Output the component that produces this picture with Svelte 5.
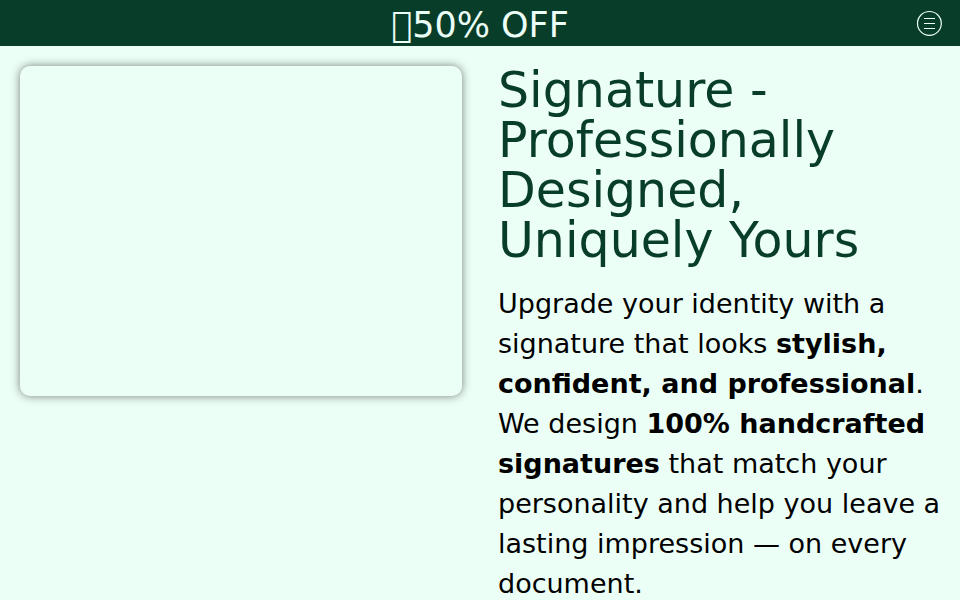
<script lang="ts">
  let menuOpen = $state(false);
</script>

<header class="topbar">
  <p class="offer">&#xF1234;50% OFF</p>
  <button
    class="menu-btn"
    aria-label="Menu"
    aria-expanded={menuOpen}
    onclick={() => (menuOpen = !menuOpen)}
  >
    <svg width="26" height="26" viewBox="0 0 26 26" fill="none" stroke="currentColor" stroke-width="1.2">
      <circle cx="13.4" cy="13.4" r="11.9" />
      <path d="M8 8.5h11M8 13.5h11M8 18.5h11" />
    </svg>
  </button>
</header>

<main class="hero">
  <div class="preview"></div>
  <section class="intro">
    <h1>Signature - Professionally Designed, Uniquely Yours</h1>
    <p>
      Upgrade your identity with a signature that looks
      <strong>stylish, confident, and professional</strong>. We design
      <strong>100% handcrafted signatures</strong> that match your personality and help you
      leave a lasting impression — on every document.
    </p>
  </section>
</main>

<style>
  :global(body) {
    margin: 0;
    background: #ecfff7;
    font-family: "DejaVu Sans", sans-serif;
  }

  .topbar {
    display: grid;
    grid-template-columns: 1fr auto 1fr;
    align-items: center;
    height: 46px;
    padding: 0 18px;
    background: #083d2a;
    color: #ecfff7;
  }

  .offer {
    grid-column: 2;
    margin: 0;
    padding-top: 4px;
    font-size: 35px;
    line-height: 42px;
    white-space: nowrap;
  }

  .menu-btn {
    justify-self: end;
    display: flex;
    padding: 0;
    border: none;
    background: none;
    color: inherit;
    cursor: pointer;
  }

  .hero {
    display: grid;
    grid-template-columns: 442fr 450fr;
    align-items: start;
    gap: 36px;
    padding: 20px 12px 20px 20px;
  }

  .preview {
    aspect-ratio: 442 / 330;
    border-radius: 10px;
    box-shadow: 0 0 10px rgba(0, 0, 0, 0.5);
    background: #ecfff7;
  }

  h1 {
    margin: 0;
    color: #083d2a;
    font-size: 49px;
    font-weight: 400;
    line-height: 50px;
  }

  .intro p {
    margin: 18px 0 0;
    color: #000;
    font-size: 27px;
    line-height: 40px;
  }
</style>
